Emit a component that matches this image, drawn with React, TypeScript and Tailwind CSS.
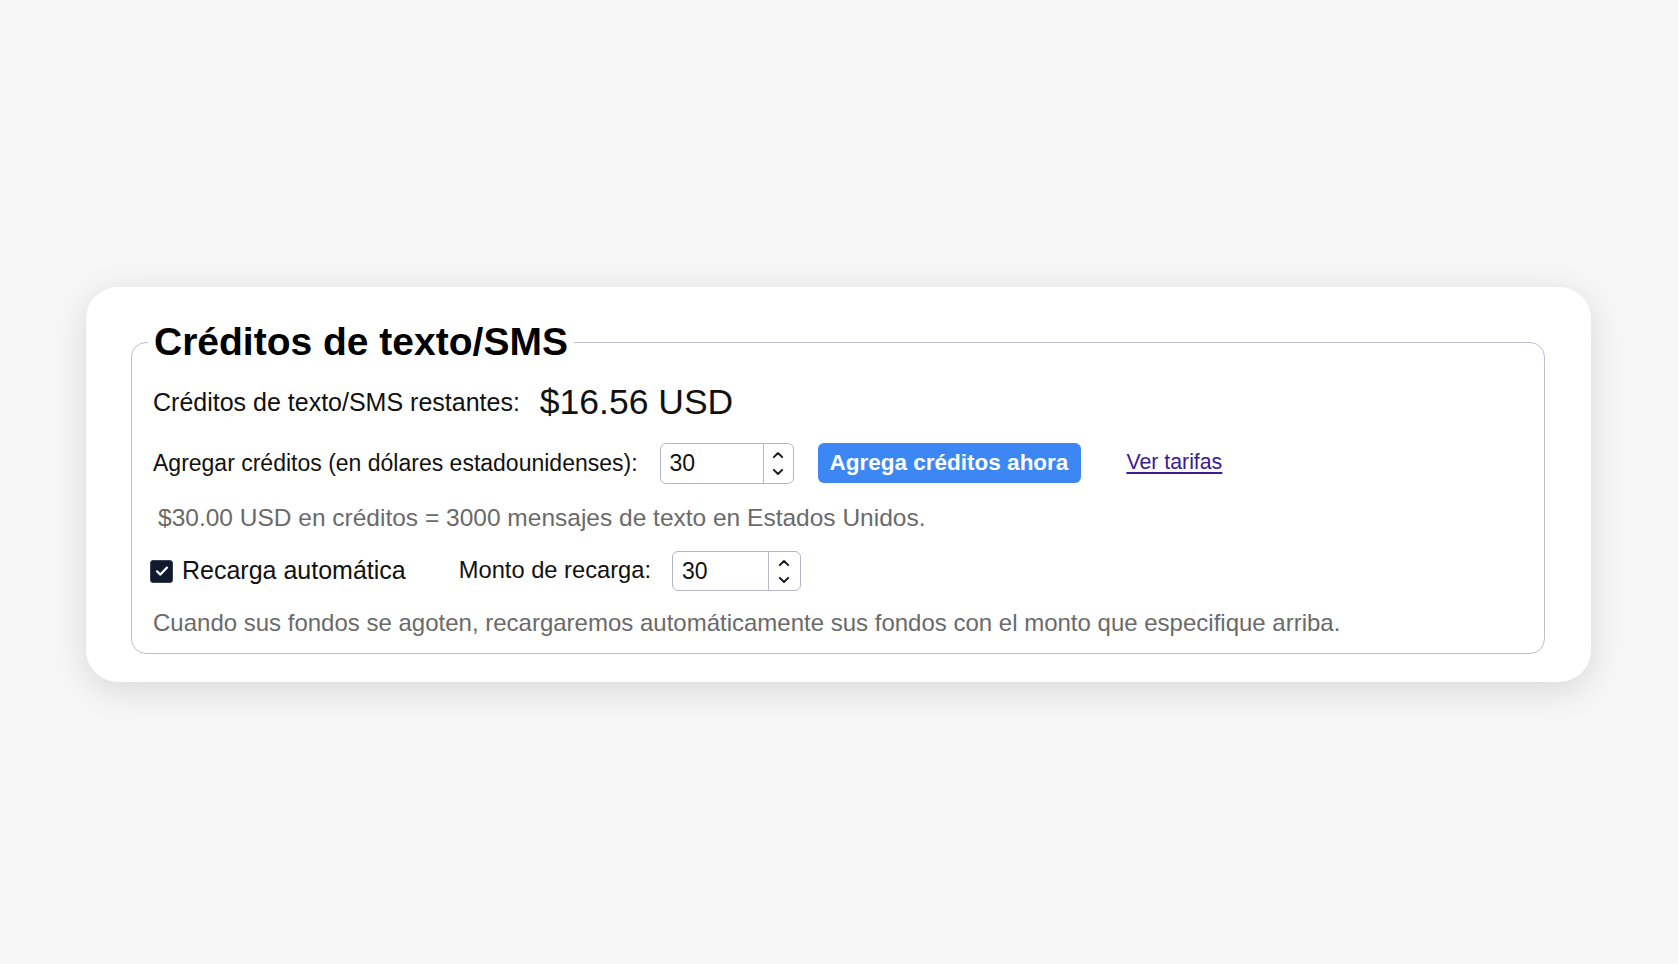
import React from "react";

function Spinner() {
  return (
    <div className="flex h-full w-full flex-col items-center justify-center gap-[9px] border-l border-[#b9b9cc]">
      <svg width="12" height="8" viewBox="0 0 12 8" fill="none">
        <path d="M1.8 6.2 L6 2 L10.2 6.2" stroke="#1a1a1a" strokeWidth="1.9" strokeLinecap="round" strokeLinejoin="round" />
      </svg>
      <svg width="12" height="8" viewBox="0 0 12 8" fill="none">
        <path d="M1.8 1.8 L6 6 L10.2 1.8" stroke="#1a1a1a" strokeWidth="1.9" strokeLinecap="round" strokeLinejoin="round" />
      </svg>
    </div>
  );
}

function NumberBox({ width, height, spin }: { width: string; height: string; spin: string }) {
  return (
    <div className={`flex items-stretch rounded-[6px] border border-[#b5b5c9] bg-white ${width} ${height}`}>
      <div className="flex flex-1 items-center pl-[9px] text-[23px] text-[#111]">30</div>
      <div className={`${spin} flex`}>
        <Spinner />
      </div>
    </div>
  );
}

export default function App() {
  return (
    <div
      className="min-h-screen w-full bg-[#f7f7f7] pl-[86px] pt-[287px]"
      style={{ fontFamily: '"Liberation Sans", Arial, sans-serif' }}
    >
      <div className="w-[1505px] rounded-[32px] bg-white pb-[28px] pl-[45px] pr-[46px] pt-[33px] shadow-[0_8px_36px_rgba(0,0,0,0.13)]">
        <fieldset className="rounded-[15px] border border-[#bdbdd2] pb-[15px] pl-[21px] pr-[21px]">
          <legend className="ml-[-5px] px-[6px] text-[39px] font-bold leading-[44px] text-black">
            Créditos de texto/SMS
          </legend>

          <div className="mt-[19px] flex h-[40px] items-center">
            <span className="text-[25px] text-[#111]">Créditos de texto/SMS restantes:</span>
            <span className="ml-[20px] text-[35.5px] text-[#111]">$16.56 USD</span>
          </div>

          <div className="mt-[19px] flex h-[42px] items-center">
            <span className="text-[23px] text-[#111]">Agregar créditos (en dólares estadounidenses):</span>
            <div className="ml-[22px]">
              <NumberBox width="w-[134px]" height="h-[41px]" spin="w-[30px]" />
            </div>
            <button className="ml-[24px] flex h-[40px] items-center rounded-[6px] bg-[#3d87f4] pl-[12px] pr-[13px] text-[22.5px] font-bold text-white">
              Agrega créditos ahora
            </button>
            <a href="#" className="ml-[45px] text-[21.3px] text-[#3b1a92] underline underline-offset-[3px]">
              Ver tarifas
            </a>
          </div>

          <div className="mt-[19px] flex h-[30px] items-center pl-[5px] text-[24.5px] text-[#6a6a6a]">
            $30.00 USD en créditos = 3000 mensajes de texto en Estados Unidos.
          </div>

          <div className="mt-[18px] flex h-[40px] items-center">
            <div className="ml-[-3px] flex h-[23px] w-[23px] items-center justify-center rounded-[3px] border border-[#3a4150] bg-[#111a2e]">
              <svg width="16" height="16" viewBox="0 0 16 16" fill="none">
                <path d="M3 8.3 L6.4 11.6 L13 4.6" stroke="white" strokeWidth="2.2" strokeLinecap="round" strokeLinejoin="round" />
              </svg>
            </div>
            <span className="ml-[9px] text-[25px] text-[#111]">Recarga automática</span>
            <span className="ml-[53px] text-[23.7px] text-[#111]">Monto de recarga:</span>
            <div className="ml-[21px]">
              <NumberBox width="w-[129px]" height="h-[40px]" spin="w-[32px]" />
            </div>
          </div>

          <div className="mt-[17px] flex h-[30px] items-center text-[24px] text-[#6a6a6a]">
            Cuando sus fondos se agoten, recargaremos automáticamente sus fondos con el monto que especifique arriba.
          </div>
        </fieldset>
      </div>
    </div>
  );
}
